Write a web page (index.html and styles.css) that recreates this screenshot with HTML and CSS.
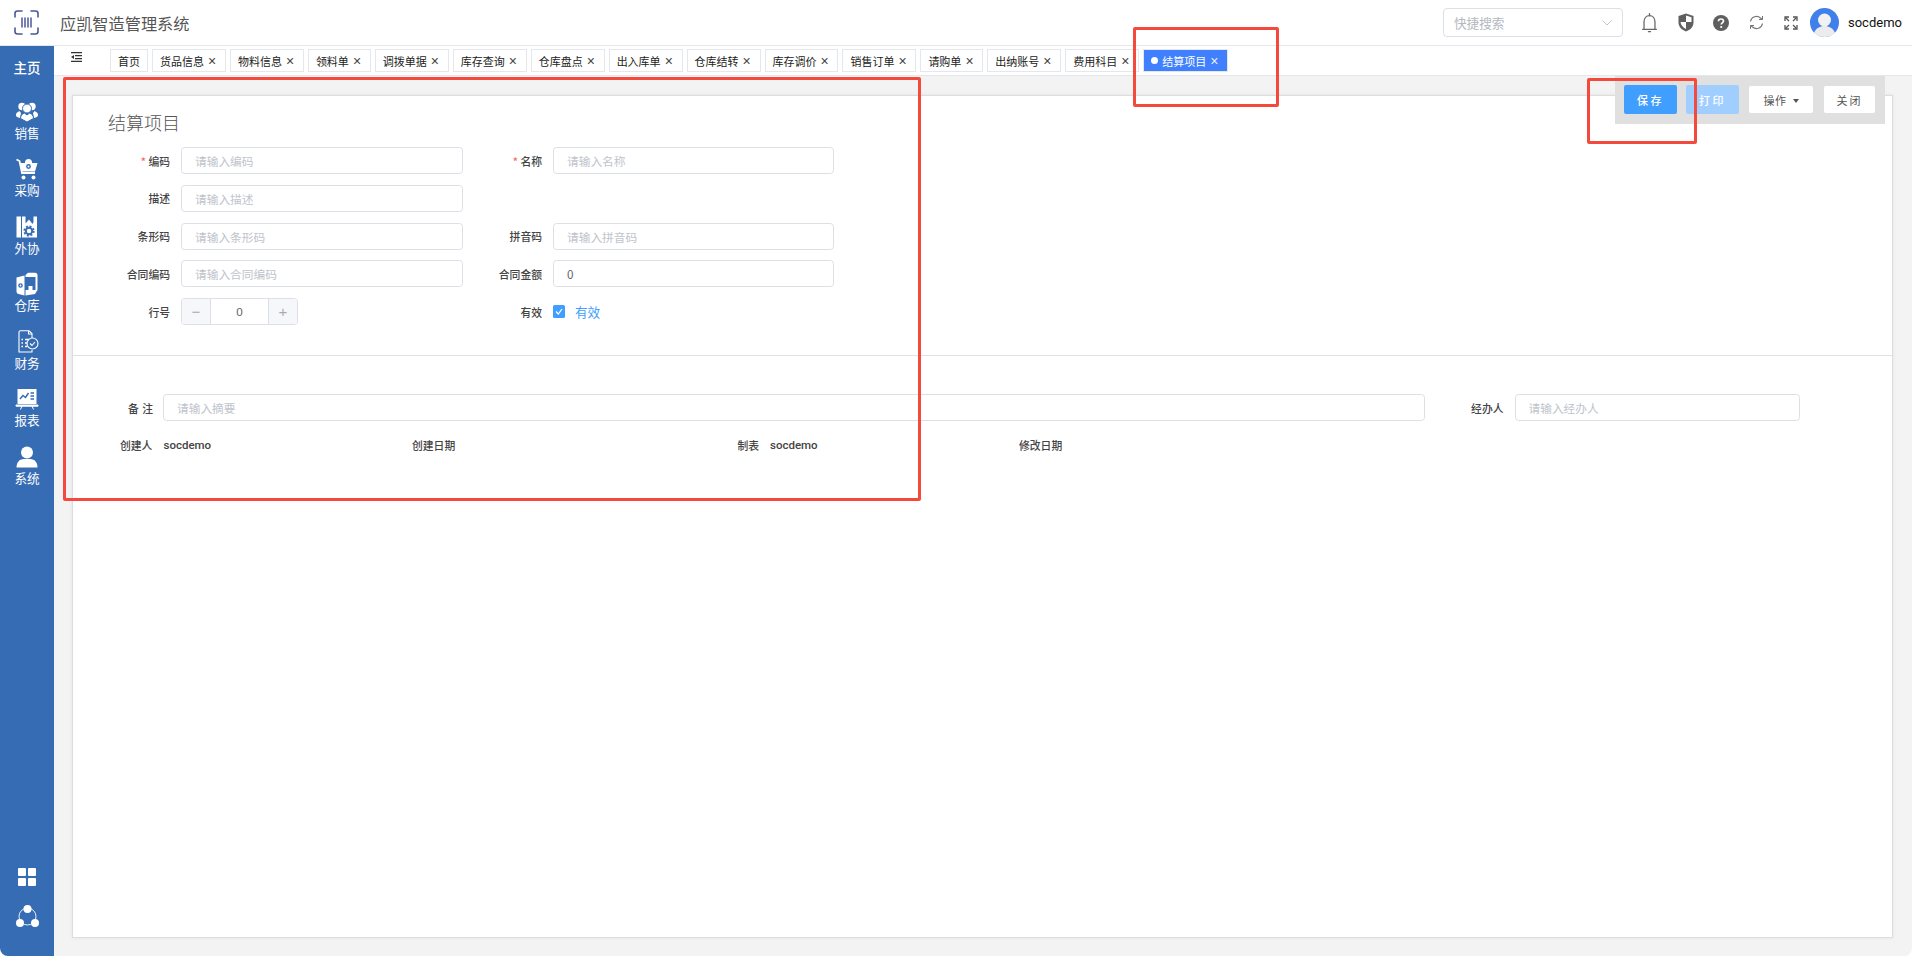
FILE: index.html
```html
<!DOCTYPE html>
<html>
<head>
<title>结算项目</title>
<meta charset='utf-8'/>
<link rel="stylesheet" href="styles.css">
</head>
<body>
<div class='app'>
	<header class='topbar'>
		<svg class='logo' width='25' height='25' viewBox='0 0 25 25' fill='none' stroke='#4c5796' stroke-width='1.6' stroke-linecap='round'>
			<path d='M8 1H3.5Q1 1 1 3.5V7M17 1h4.500Q24 1 24 3.500V7M1 18v3.500Q1 24 3.500 24H8M24 18v3.500Q24 24 21.500 24H17'/>
			<path d='M8 8v9M11 8v9M14 8v9M17 8v9' stroke-width='1.500'/>
		</svg>
		<div class='systitle'>应凯智造管理系统</div>
		<div class='quicksearch'>
			<span>快捷搜索</span>
			<svg width='10' height='6' viewBox='0 0 10 6' fill='none' stroke='#c0c4cc'><path d='M.5 .5 5 5 9.500 .5'/></svg>
		</div>
		<div class='toolicons'>
			<svg class='ic-bell' width='17' height='20' viewBox='0 0 16 19' fill='none' stroke='#666' stroke-width='1.200'><path d='M1 15.500h14M2.800 15.500V8.500C2.800 5 5 2.500 8 2.500s5.200 2.500 5.200 6v7'/><path d='M8 .5v2M7 17.800h2' stroke-linecap='round'/></svg>
			<svg class='ic-shield' width='16' height='19' viewBox='0 0 16 19'><path d='M8 .5 15.500 3v6.500c0 4.500-3.500 7.500-7.500 9-4-1.500-7.500-4.500-7.500-9V3z' fill='#5f5f5f'/><path d='M8 2.500 13.500 4.300V9H8zM8 9H2.500c.3 3 2.500 5.500 5.500 7z' fill='#fff'/></svg>
			<svg class='ic-help' width='16' height='16' viewBox='0 0 16 16'><circle cx='8' cy='8' r='8' fill='#5f5f5f'/><path d='M5.500 6.200C5.500 4.800 6.600 4 8 4s2.500.8 2.500 2.100c0 1.800-2.300 1.800-2.300 3.500' fill='none' stroke='#fff' stroke-width='1.700'/><circle cx='8.200' cy='12' r='1.100' fill='#fff'/></svg>
			<svg class='ic-sync' width='15' height='15' viewBox='0 0 15 15' fill='none' stroke='#777' stroke-width='1.200'><path d='M1.500 6.500A6 6 0 0 1 11.500 3l2 1.500M13.500 8.500A6 6 0 0 1 3.500 12l-2-1.500'/><path d='M13.500 1v3.500H10M1.500 14v-3.500H5' stroke-width='1'/></svg>
			<svg class='ic-full' width='14' height='14' viewBox='0 0 14 14' fill='none' stroke='#555' stroke-width='1.300'><path d='M5 1H1v4M9 1h4v4M1 9v4h4M13 9v4H9'/><path d='M1.500 1.500 5 5M12.500 1.500 9 5M1.500 12.500 5 9M12.500 12.500 9 9'/></svg>
			<svg class='avatar' width='29' height='29' viewBox='0 0 29 29'><circle cx='14.500' cy='14.500' r='14.500' fill='#3f80ea'/><circle cx='14.500' cy='12' r='6.500' fill='#f1f1f1'/><path d='M4 25c2-5 6-7 10.500-7S23 20 25 25c-2.500 2.600-6.500 4-10.500 4S6.500 27.600 4 25z' fill='#ececec'/></svg>
			<span class='username'>socdemo</span>
		</div>
	</header>
	<div class='bodywrap'>
		<nav class='sidebar'>
			<div class='navhome'>主页</div>
			<div class='navitem'>
				<svg width='24' height='24' viewBox='0 0 24 24' fill='#fff'><circle cx='7' cy='6.500' r='3.700'/><circle cx='17' cy='6.500' r='3.700'/><path d='M2 17c-1.500-1-1.500-3 0-4.500l2.500-1.500 1.500 2-1 5zM22 17c1.500-1 1.500-3 0-4.500L19.500 11 18 13l1 5z'/><circle cx='12' cy='8.500' r='4.500' stroke='#366cb3'/><path d='M5.500 18.500c0-3 2-5 3.800-5.500L12 15l2.700-2c1.800.5 3.800 2.500 3.800 5.500L12 22z' stroke='#366cb3'/></svg>
				<span>销售</span>
			</div>
			<div class='navitem'>
				<svg width='24' height='24' viewBox='0 0 24 24' fill='#fff'><path d='M1.500 2.500 4.500 4 7 16h13' fill='none' stroke='#fff' stroke-width='1.800'/><path d='M5 6h17.500L20 14.500H7z'/><circle cx='13.500' cy='5.500' r='3.500' fill='#fff'/><circle cx='13.500' cy='9.500' r='2.400' fill='#366cb3'/><circle cx='13.500' cy='9.500' r='1' fill='#fff'/><circle cx='8.500' cy='20.500' r='2'/><circle cx='18.500' cy='20.500' r='2'/></svg>
				<span>采购</span>
			</div>
			<div class='navitem'>
				<svg width='24' height='24' viewBox='0 0 24 24' fill='#fff'><path d='M1.500 1.500h4.500v21H1.500zM7 1.500h3.500v7l3.500-4 3.500 4.500 1-2V1.500h3.500v21H7z'/><circle cx='14' cy='16' r='3.200' fill='none' stroke='#366cb3' stroke-width='2'/><circle cx='14' cy='16' r='4.800' fill='none' stroke='#366cb3' stroke-width='1.600' stroke-dasharray='2 1.770'/></svg>
				<span>外协</span>
			</div>
			<div class='navitem'>
				<svg width='24' height='24' viewBox='0 0 24 24' fill='#fff'><path d='M1.500 5.500 9.500 3.500V23.500L3.500 22Q1.500 21.500 1.500 19.500z'/><path d='M10.500 3 13 .8h7q2.500 0 2.500 2.500V18L20 22l-9.500 1.500V18h3v-4h4v4h3V5H10.500z'/><circle cx='5.500' cy='13.500' r='2.300' fill='#366cb3'/><circle cx='5.500' cy='13.500' r='.9' fill='#fff'/></svg>
				<span>仓库</span>
			</div>
			<div class='navitem'>
				<svg width='24' height='24' viewBox='0 0 24 24' fill='none' stroke='#fff' stroke-width='1.100'><path d='M17 8V3.500L14 .8H5.500Q4 .8 4 2.300V22h13v-2'/><path d='M13.500 1v3h3.500'/><path d='M6.500 9.500H8M6.500 13H8M6.500 16.500H8M10 9.500h4M10 13h2M10 16.500h2' stroke-width='1.300'/><circle cx='17.500' cy='13.500' r='5.500'/><path d='M15 13.500l2 2 3-3.500'/></svg>
				<span>财务</span>
			</div>
			<div class='navitem'>
				<svg width='24' height='24' viewBox='0 0 24 24' fill='#fff'><path d='M2.500 2h19v15h-19z'/><path d='M1 18h22v1.200H1zM7 19l-1.500 3.500M17 19l1.500 3.500' stroke='#fff' stroke-width='1'/><path d='M5 12l3-3.500 2.500 2L13.500 6' fill='none' stroke='#366cb3' stroke-width='1.500'/><path d='M15.500 6h3.500M15.500 9h3.500M15.500 12h3.500' stroke='#366cb3' stroke-width='1.300'/></svg>
				<span>报表</span>
			</div>
			<div class='navitem'>
				<svg width='24' height='24' viewBox='0 0 24 24' fill='#fff'><circle cx='12' cy='7.500' r='6'/><path d='M1.500 22.500c0-5 3-8.500 7-8.500h7c4 0 7 3.500 7 8.500z'/></svg>
				<span>系统</span>
			</div>
			<div class='navbottom'>
				<svg width='18' height='18' viewBox='0 0 18 18' fill='#fff'><rect width='8' height='8' rx='1'/><rect x='10' width='8' height='8' rx='1'/><rect y='10' width='8' height='8' rx='1'/><rect x='10' y='10' width='8' height='8' rx='1'/></svg>
				<svg width='23' height='22' viewBox='0 0 23 22' fill='#fff'><circle cx='11.500' cy='11.500' r='8.500' fill='none' stroke='#fff' stroke-width='.9'/><circle cx='11.500' cy='4' r='4'/><circle cx='4' cy='18' r='4'/><circle cx='19' cy='18' r='4'/></svg>
			</div>
		</nav>
		<main class='mainarea'>
			<div class='tabsbar'>
				<svg class='foldicon' width='11' height='10' viewBox='0 0 11 10' fill='#333'><path d='M0 0h11v1.300H0zM4 3h7v1.300H4zM4 6h7v1.300H4zM0 8.700h11V10H0zM3 3v4L0 5z'/></svg>
				<div class='tab'>首页</div>
				<div class='tab'>货品信息<i class='tabx'>×</i></div>
				<div class='tab'>物料信息<i class='tabx'>×</i></div>
				<div class='tab'>领料单<i class='tabx'>×</i></div>
				<div class='tab'>调拨单据<i class='tabx'>×</i></div>
				<div class='tab'>库存查询<i class='tabx'>×</i></div>
				<div class='tab'>仓库盘点<i class='tabx'>×</i></div>
				<div class='tab'>出入库单<i class='tabx'>×</i></div>
				<div class='tab'>仓库结转<i class='tabx'>×</i></div>
				<div class='tab'>库存调价<i class='tabx'>×</i></div>
				<div class='tab'>销售订单<i class='tabx'>×</i></div>
				<div class='tab'>请购单<i class='tabx'>×</i></div>
				<div class='tab'>出纳账号<i class='tabx'>×</i></div>
				<div class='tab'>费用科目<i class='tabx'>×</i></div>
				<div class='tab active'><b class='tabdot'></b>结算项目<i class='tabx'>×</i></div>
			</div>
			<div class='content'>
				<div class='actions'>
					<button class='btn primary'>保存</button>
					<button class='btn disabled'>打印</button>
					<button class='btn plain opbtn'>操作<b class='caret'></b></button>
					<button class='btn plain closebtn'>关闭</button>
				</div>
				<section class='card'>
					<h1 class='cardtitle'>结算项目</h1>
					<div class='formgrid'>
						<label class='lbl'><em>*</em> 编码</label><input class='inp' placeholder='请输入编码'/>
						<label class='lbl'><em>*</em> 名称</label><input class='inp' placeholder='请输入名称'/>
						<label class='lbl'>描述</label><input class='inp' placeholder='请输入描述'/>
						<span></span><span></span>
						<label class='lbl'>条形码</label><input class='inp' placeholder='请输入条形码'/>
						<label class='lbl'>拼音码</label><input class='inp' placeholder='请输入拼音码'/>
						<label class='lbl'>合同编码</label><input class='inp' placeholder='请输入合同编码'/>
						<label class='lbl'>合同金额</label><input class='inp' value='0'/>
						<label class='lbl'>行号</label>
						<div class='stepper'><span class='stepbtn'>−</span><span class='stepval'>0</span><span class='stepbtn'>+</span></div>
						<label class='lbl'>有效</label>
						<div class='checkrow'>
							<svg width='12' height='13' viewBox='0 0 12 13'><rect width='12' height='13' rx='1.500' fill='#409eff'/><path d='M3 6.500 5.300 9 9 4' fill='none' stroke='#fff' stroke-width='1.200'/></svg>
							<span>有效</span>
						</div>
					</div>
					<div class='divider'></div>
					<div class='remarkrow'>
						<label class='lbl spaced'>备 注</label><input class='inp' placeholder='请输入摘要'/>
						<label class='lbl'>经办人</label><input class='inp' placeholder='请输入经办人'/>
					</div>
					<div class='metarow'>
						<div class='metaitem'><span class='metakey wide'>创建人</span><span>socdemo</span></div>
						<div class='metaitem'><span class='metakey'>创建日期</span></div>
						<div class='metaitem'><span class='metakey narrow'>制表</span><span>socdemo</span></div>
						<div class='metaitem'><span class='metakey'>修改日期</span></div>
					</div>
				</section>
			</div>
		</main>
	</div>
	<div class='mark mark-form'></div>
	<div class='mark mark-tab'></div>
	<div class='mark mark-save'></div>
</div>
</body>
</html>
```

FILE: styles.css
```css
html {
	background: #fff;
}
body {
	margin: 0;
	font-family: "Liberation Sans", "Noto Sans CJK SC", sans-serif;
	color: #555;
}
.app {
	position: relative;
	width: 1912px;
	height: 956px;
	overflow: hidden;
	display: flex;
	flex-direction: column;
	border-radius: 8px;
}
/* top bar */
.topbar {
	height: 45px;
	flex: none;
	display: flex;
	align-items: center;
	background: #fff;
	border-bottom: 1px solid #e4e7ed;
}
.logo {
	margin-left: 14px;
}
.systitle {
	margin-left: 21px;
	font-size: 16.200px;
	color: #555;
	font-family: "Noto Sans CJK SC", sans-serif;
}
.quicksearch {
	margin-left: auto;
	height: 27px;
	border: 1px solid #dcdfe6;
	border-radius: 4px;
	display: flex;
	align-items: center;
	justify-content: space-between;
	padding: 0 10px;
	width: 158px;
	font-size: 12.600px;
	color: #b4b8c0;
}
.toolicons {
	display: flex;
	align-items: center;
	margin-left: 19px;
	width: 270px;
}
.ic-bell { margin-left: -1px; }
.ic-shield { margin-left: 20px; }
.ic-help { margin-left: 19px; }
.ic-sync { margin-left: 20px; }
.ic-full { margin-left: 20px; }
.avatar { margin-left: 12px; }
.username {
	margin-left: 9px;
	font-size: 13px;
	color: #111;
	font-family: Roboto, "Liberation Sans", sans-serif;
}
/* sidebar */
.bodywrap {
	flex: 1;
	display: flex;
	min-height: 0;
}
.sidebar {
	width: 54px;
	flex: none;
	display: flex;
	flex-direction: column;
	align-items: center;
	background: #366cb3;
	color: #fff;
	font-family: "Noto Sans CJK SC", sans-serif;
}
.navhome {
	font-size: 13.500px;
	line-height: 18px;
	font-weight: 500;
	margin: 12px 0 23.500px;
}
.navitem {
	height: 57.500px;
	display: flex;
	flex-direction: column;
	align-items: center;
	font-size: 12.600px;
	line-height: 18px;
}
.navbottom {
	margin-top: auto;
	padding-bottom: 29px;
	display: flex;
	flex-direction: column;
	align-items: center;
	gap: 19px;
}
/* tabs */
.mainarea {
	flex: 1;
	display: flex;
	flex-direction: column;
	min-width: 0;
	background: #f3f3f3;
}
.tabsbar {
	height: 29px;
	flex: none;
	display: flex;
	align-items: center;
	gap: 4px;
	background: #fff;
	border-bottom: 1px solid #e4e7ed;
}
.foldicon {
	margin: -8px 24px 0 17px;
}
.tab {
	height: 21px;
	display: flex;
	align-items: center;
	padding: 0 7px;
	border: 1px solid #e4e7ed;
	font-size: 11px;
	color: #222;
	white-space: nowrap;
	font-family: "Noto Sans CJK SC", sans-serif;
}
.tabx {
	width: 8px;
	margin: 0 1.950px 0 4px;
	font-style: normal;
	font-size: 14px;
	line-height: 1;
	text-align: center;
	color: #444;
	font-family: "Liberation Sans", sans-serif;
}
.tab.active {
	background: #4080ff;
	color: #fff;
}
.tab.active .tabx {
	color: #e6eeff;
	margin-right: 2px;
}
.tabdot {
	width: 7px;
	height: 7px;
	margin-right: 4px;
	border-radius: 50%;
	background: #fff;
}
/* content */
.content {
	position: relative;
	flex: 1;
	display: flex;
	padding: 19px 19px 18px 18px;
	min-height: 0;
}
.actions {
	position: absolute;
	top: 0;
	right: 27px;
	width: 261px;
	height: 48px;
	padding-left: 9px;
	display: flex;
	align-items: flex-start;
	background: #e0e0e0;
}
.btn {
	margin: 9px 9px 0 0;
	padding: 0;
	height: 29px;
	width: 53px;
	border: 0;
	border-radius: 2px;
	font-size: 11px;
	letter-spacing: 2.500px;
	font-family: "Noto Sans CJK SC", sans-serif;
	font-weight: 500;
}
.primary {
	background: #409eff;
	color: #fff;
}
.disabled {
	background: #a0cfff;
	color: #fff;
	margin-right: 10px;
}
.plain {
	background: #fff;
	color: #555;
	height: 27px;
	margin-top: 10px;
	letter-spacing: 2px;
	font-weight: 400;
}
.opbtn {
	width: 64px;
	margin-right: 11px;
	letter-spacing: .500px;
}
.closebtn {
	width: 51px;
	margin-right: 0;
}
.caret {
	display: inline-block;
	margin-left: 6px;
	vertical-align: 2px;
	border: 3.500px solid transparent;
	border-top: 4px solid #555;
	border-bottom: 0;
}
.card {
	flex: 1;
	background: #fff;
	border: 1px solid #ddd;
	box-shadow: 0 0 3px rgba(0, 0, 0, .08);
}
.cardtitle {
	margin: 15px 0 13px 35px;
	font-size: 18px;
	line-height: 23px;
	font-weight: 300;
	color: #555;
	font-family: "Noto Sans CJK SC", sans-serif;
}
.formgrid {
	display: grid;
	grid-template-columns: 108px 282px 90px 281px;
	grid-auto-rows: 27px;
	row-gap: 10.750px;
	align-items: center;
}
.lbl {
	font-size: 10.800px;
	color: #444;
	text-align: right;
	padding-right: 11px;
	font-family: "Noto Sans CJK SC", sans-serif;
	font-weight: 500;
}
.lbl em {
	font-style: normal;
	color: #f56c6c;
}
.inp {
	box-sizing: border-box;
	width: 100%;
	height: 27px;
	padding: 0 13px;
	border: 1px solid #dcdfe6;
	border-radius: 3.600px;
	outline: 0;
	font-size: 11.700px;
	color: #606266;
	font-family: "Noto Sans CJK SC", sans-serif;
}
.inp::placeholder {
	color: #c0c4cc;
}
.stepper {
	box-sizing: border-box;
	width: 117px;
	height: 27px;
	display: flex;
	border: 1px solid #dcdfe6;
	border-radius: 3.600px;
	overflow: hidden;
	font-size: 11.700px;
	color: #606266;
}
.stepbtn {
	width: 28px;
	flex: none;
	display: flex;
	align-items: center;
	justify-content: center;
	background: #f5f7fa;
	font-size: 15px;
	color: #a8abb2;
}
.stepval {
	flex: 1;
	display: flex;
	align-items: center;
	justify-content: center;
	border-left: 1px solid #dcdfe6;
	border-right: 1px solid #dcdfe6;
}
.checkrow {
	display: flex;
	align-items: center;
	gap: 10px;
	font-size: 12.600px;
	color: #409eff;
	font-family: "Noto Sans CJK SC", sans-serif;
}
.divider {
	margin-top: 30px;
	border-top: 1px solid #e0e0e6;
}
.remarkrow {
	display: grid;
	grid-template-columns: 90px 1261.500px 90px 285.500px;
	align-items: center;
	padding-top: 38px;
}
.spaced {
	white-space: pre;
	word-spacing: 1px;
	padding-right: 10px;
}
.metarow {
	display: flex;
	margin: 16px 0 0 47px;
	font-size: 11.500px;
	line-height: 16px;
	color: #444;
	font-family: Roboto, "Liberation Sans", sans-serif;
}
.metaitem {
	display: flex;
	font-weight: 500;
}
.metaitem:nth-child(1) { width: 292px; }
.metaitem:nth-child(2) { width: 325.500px; }
.metaitem:nth-child(3) { width: 281.500px; }
.metakey {
	font-size: 10.800px;
	font-family: "Noto Sans CJK SC", sans-serif;
}
.metakey.wide { width: 43.500px; }
.metakey.narrow { width: 32.500px; }
/* red notes drawn over the screenshot */
.mark {
	position: absolute;
	box-sizing: border-box;
	border: 3px solid #f44a3e;
	border-radius: 2px;
}
.mark-form {
	left: 63px;
	top: 77px;
	width: 858px;
	height: 424px;
}
.mark-tab {
	left: 1133px;
	top: 27px;
	width: 146px;
	height: 80px;
}
.mark-save {
	left: 1587px;
	top: 78px;
	width: 110px;
	height: 66px;
}
```
